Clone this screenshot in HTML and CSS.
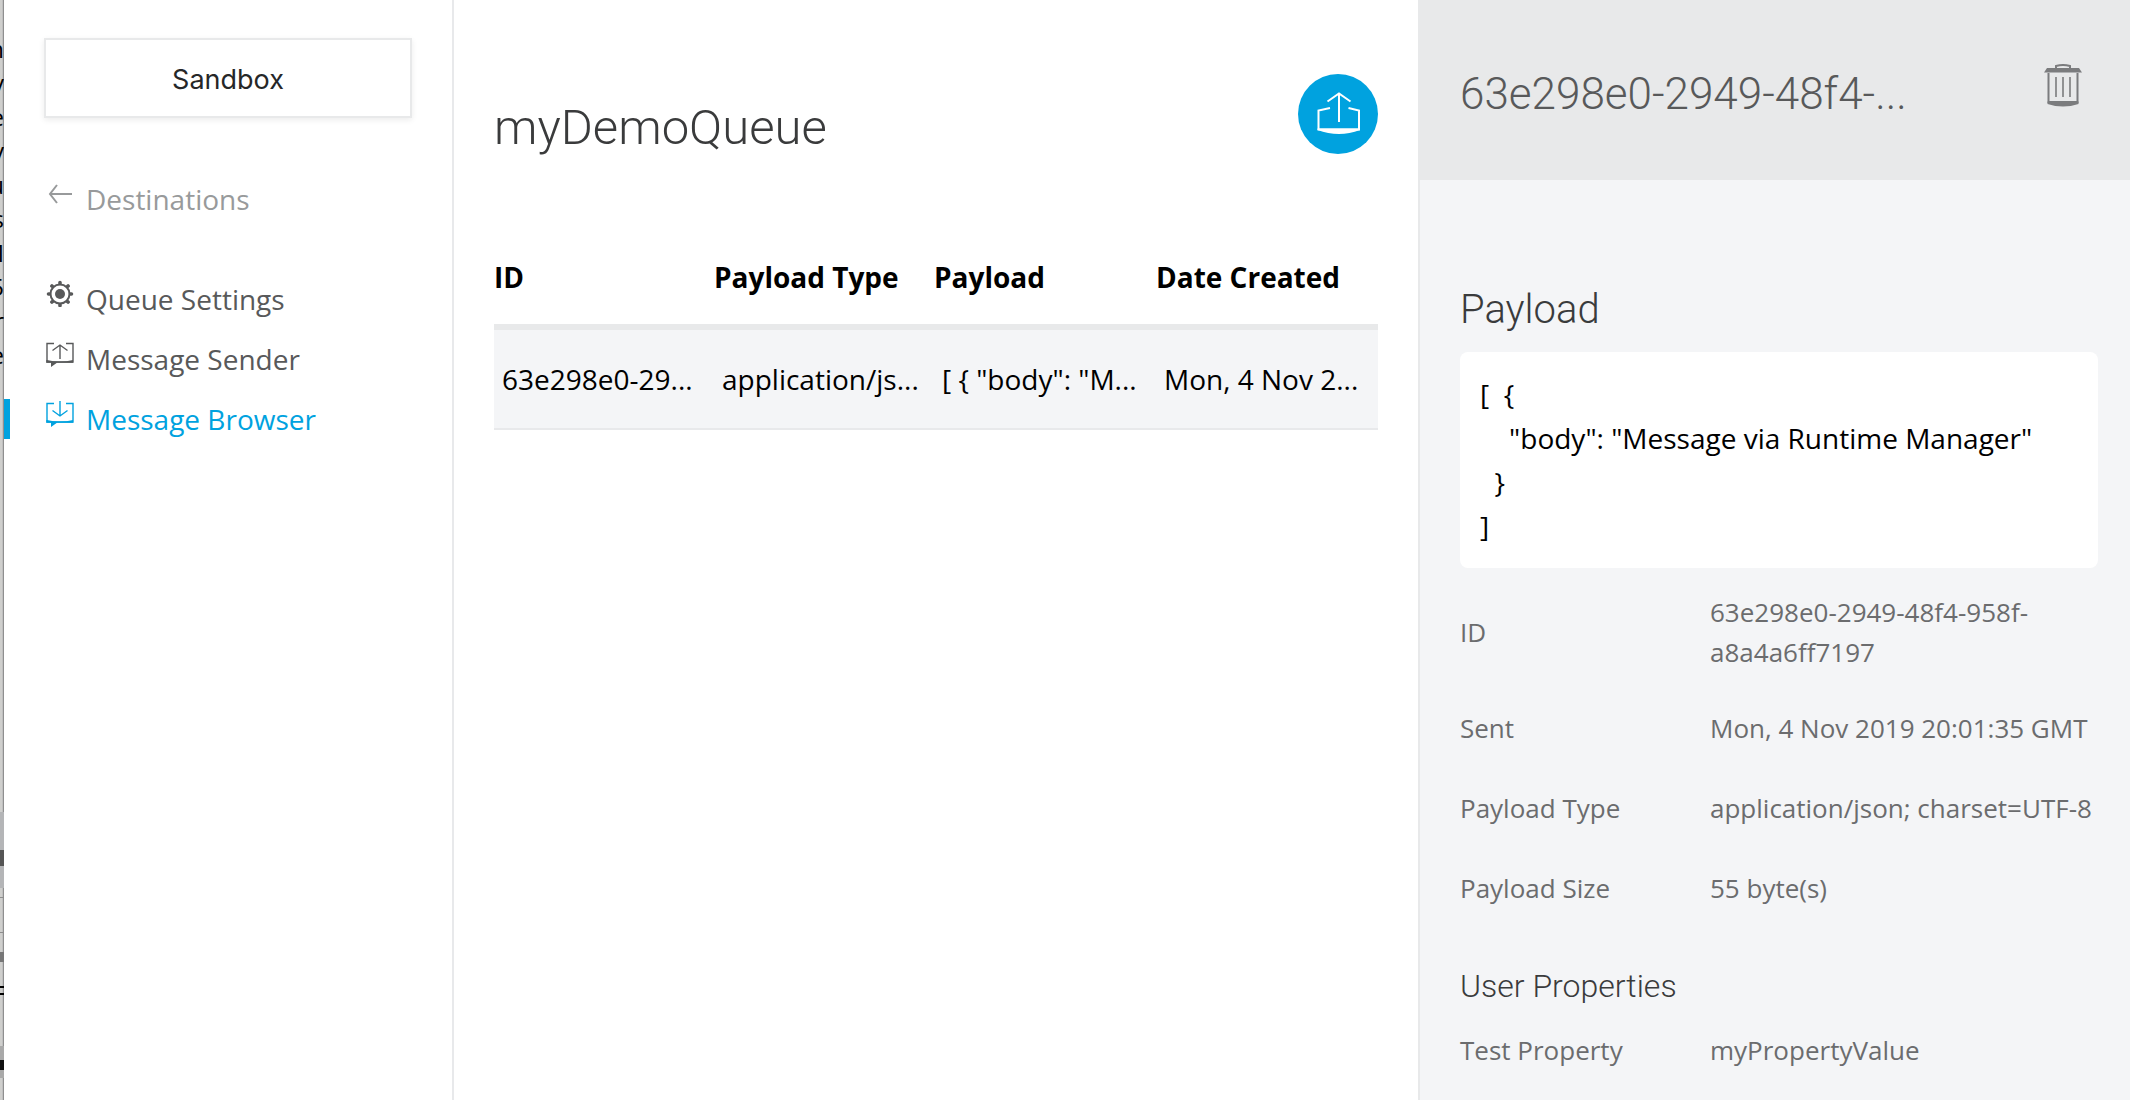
FILE: index.html
```html
<!DOCTYPE html>
<html lang="en">
<head>
<meta charset="utf-8">
<title>Message Browser - myDemoQueue</title>
<meta name="viewport" content="width=device-width, initial-scale=1">
<link rel="stylesheet" href="styles.css">
</head>
<body>
<div class="app">
  <div class="edge" aria-hidden="true">
    <div class="edge-text"><span>n</span><span>v</span><span>e</span><span>y</span><span>u</span><span>s</span><span>M</span><span>5</span><span>r</span><span>e</span><span>1</span></div>
    <div class="edge-rows"></div>
  </div>

  <aside class="sidebar">
    <button class="env" type="button">Sandbox</button>
    <nav class="nav">
      <a class="nav-link back" href="#">
        <svg class="icon" viewBox="0 0 28 28" fill="none" stroke="currentColor" stroke-width="2"><path d="M26 15H4M11 6L4 15L11 24"/></svg>
        <span>Destinations</span>
      </a>
      <a class="nav-link" href="#">
        <svg class="icon" viewBox="0 0 28 28" fill="none" stroke="currentColor"><circle cx="14" cy="15" r="9.500" stroke-width="2"/><circle cx="14" cy="15" r="5" fill="currentColor" stroke="none"/><path stroke-width="3.600" stroke-linecap="round" d="M14 3.500V4.500M14 25.500V26.500M2.500 15H3.500M24.500 15H25.500M5.900 6.900L6.300 7.300M21.700 22.700L22.100 23.100M5.900 23.100L6.300 22.700M21.700 7.300L22.100 6.900"/></svg>
        <span>Queue Settings</span>
      </a>
      <a class="nav-link" href="#">
        <svg class="icon" viewBox="0 0 28 28" fill="none" stroke="currentColor" stroke-width="1.400"><path d="M8 4.500H1V23H27V4.500H20M14 20V6M6.500 11.500L14 6L21.500 11.500"/><path fill="currentColor" stroke="none" d="M1 21Q14 24 27 21V23.700H11L5 28V23.700H.3V21Z"/></svg>
        <span>Message Sender</span>
      </a>
      <a class="nav-link active" href="#" aria-current="page">
        <svg class="icon" viewBox="0 0 28 28" fill="none" stroke="currentColor" stroke-width="1.400"><path d="M8 4.500H1V23H27V4.500H20M14 2V17M6.500 11.500L14 17L21.500 11.500"/><path fill="currentColor" stroke="none" d="M1 21Q14 24 27 21V23.700H11L5 28V23.700H.3V21Z"/></svg>
        <span>Message Browser</span>
      </a>
    </nav>
  </aside>

  <main class="main">
    <header class="main-head">
      <h1 class="title">myDemoQueue</h1>
      <button class="send" type="button" aria-label="Send message">
        <svg class="send-icon" viewBox="0 0 44 44" fill="none" stroke="currentColor" stroke-width="2"><path d="M23 30V1M11.500 9.500L23 1.500L34.500 9.500M14 16L2.500 18.500V37.500H43V18.500L32.500 16"/><path fill="currentColor" stroke="none" d="M1.500 36.500H44V38Q23 46 1.500 38Z"/></svg>
      </button>
    </header>
    <table class="messages">
      <colgroup><col class="col"><col class="col"><col class="col-wide"><col></colgroup>
      <thead>
        <tr><th scope="col">ID</th><th scope="col">Payload Type</th><th scope="col">Payload</th><th scope="col">Date Created</th></tr>
      </thead>
      <tbody>
        <tr>
          <td>63e298e0-29...</td>
          <td>application/js...</td>
          <td>[ { "body": "M...</td>
          <td>Mon, 4 Nov 2...</td>
        </tr>
      </tbody>
    </table>
  </main>

  <section class="panel">
    <header class="panel-head">
      <h2 class="panel-title">63e298e0-2949-48f4-...</h2>
      <button class="delete" type="button" aria-label="Delete message">
        <svg class="trash" viewBox="0 0 38 44" fill="none" stroke="currentColor" stroke-width="2"><path d="M12 5V2Q19 0 26 2V5M4.500 9V38H33.500V9"/><path stroke-width="1.600" d="M12 13V33M19 13V33M26 13V33"/><path fill="currentColor" stroke="none" d="M3 4H35L38 8.500H0ZM3.500 37.500H34.500V40Q19 45 3.500 40Z"/></svg>
      </button>
    </header>
    <div class="panel-body">
      <h3 class="section-title">Payload</h3>
      <pre class="payload">[  {
    "body": "Message via Runtime Manager"
  }
]</pre>
      <dl class="details">
        <div class="detail"><dt>ID</dt><dd>63e298e0-2949-48f4-958f-a8a4a6ff7197</dd></div>
        <div class="detail"><dt>Sent</dt><dd>Mon, 4 Nov 2019 20:01:35 GMT</dd></div>
        <div class="detail"><dt>Payload Type</dt><dd>application/json; charset=UTF-8</dd></div>
        <div class="detail"><dt>Payload Size</dt><dd>55 byte(s)</dd></div>
      </dl>
      <h4 class="sub-title">User Properties</h4>
      <dl class="details">
        <div class="detail"><dt>Test Property</dt><dd>myPropertyValue</dd></div>
      </dl>
    </div>
  </section>
</div>
</body>
</html>
```

FILE: styles.css
```css
* {
  box-sizing: border-box;
}

body {
  margin: 0;
  background: #fff;
  color: #000;
  font-family: "Open Sans", "Noto Sans", sans-serif;
  font-size: 28px;
  line-height: 40px;
}

h1, h2, h3, h4, dl, dd, pre {
  margin: 0;
}

button {
  padding: 0;
  border: 0;
  background: none;
  cursor: pointer;
}

svg {
  display: block;
}

.app {
  display: grid;
  grid-template-columns: 4px 450px minmax(0, 1fr) 712px;
  min-height: 100vh;
}

/* Sliver of the window behind */
.edge {
  overflow: hidden;
  background: linear-gradient(to right, #cfcfcd 0 2px, #c0c0c0 2px 3px, #8f8f8f 3px 4px);
}

.edge-text {
  display: flex;
  flex-direction: column;
  align-items: flex-end;
  height: 812px;
  padding-top: 32px;
  font-size: 24px;
  line-height: 34px;
}

.edge-rows {
  height: 288px;
  background: linear-gradient(
    to bottom,
    #b4b5b7 0 38px, #555 38px 54px, #b4b5b7 54px 76px,
    transparent 76px 85px, #8d8d8d 85px 86px,
    transparent 86px 120px, #8d8d8d 120px 121px,
    transparent 121px 140px, #777 140px 150px,
    transparent 150px 174px, #000 174px 176px,
    transparent 176px 181px, #000 181px 183px,
    transparent 183px 234px, #a9a9a9 234px 248px,
    #111 248px 258px, #a9a9a9 258px 266px,
    transparent 266px
  );
}

/* Sidebar */
.sidebar {
  padding-top: 38px;
  border-right: 2px solid #e8e9eb;
}

.env {
  display: block;
  width: 368px;
  height: 80px;
  margin: 0 40px;
  padding-top: 4px;
  border: 2px solid #e8e9ea;
  box-shadow: 0 2px 6px rgba(0, 0, 0, 0.08);
  background: #fff;
  color: #262728;
  font: 27px/40px Inter, "Liberation Sans", sans-serif;
}

.nav {
  display: flex;
  flex-direction: column;
  gap: 20px;
  padding-top: 61px;
}

.nav-link {
  display: flex;
  gap: 12px;
  padding-left: 42px;
  color: #58595a;
  text-decoration: none;
}

.back {
  margin-bottom: 40px;
  color: #989a9b;
}

.active {
  padding-left: 36px;
  border-left: 6px solid #00a2df;
  color: #00a2df;
}

.icon {
  flex: none;
  width: 28px;
  height: 28px;
}

/* Message list */
.main {
  padding: 74px 40px 0;
}

.main-head {
  display: flex;
  justify-content: space-between;
  height: 80px;
}

.title {
  padding-top: 24px;
  color: #3a3b3c;
  font: 300 49px/60px Roboto, sans-serif;
}

.send {
  display: grid;
  place-items: center;
  width: 80px;
  height: 80px;
  border-radius: 50%;
  background: #00a2df;
  color: #fff;
}

.send-icon {
  width: 44px;
  height: 44px;
}

.messages {
  width: 100%;
  margin-top: 84px;
  border-collapse: separate;
  border-spacing: 0;
  table-layout: fixed;
}

.col {
  width: 220px;
}

.col-wide {
  width: 222px;
}

.messages th {
  padding: 19px 0 27px;
  border-bottom: 6px solid #e8e9ea;
  font-weight: 700;
  text-align: left;
}

.messages td {
  padding: 29px 8px;
  border-bottom: 2px solid #e8e9eb;
  background: #f4f5f7;
  overflow: hidden;
  text-overflow: ellipsis;
  white-space: nowrap;
}

/* Message details */
.panel {
  border-left: 2px solid #e8e9ea;
  background: #f4f5f7;
}

.panel-head {
  display: flex;
  justify-content: space-between;
  height: 180px;
  padding: 64px 48px 0 40px;
  background: #e8e9ea;
}

.panel-title {
  color: #58595a;
  font: 300 44px/60px Roboto, sans-serif;
}

.delete {
  align-self: flex-start;
  color: #7b7c7e;
}

.trash {
  width: 38px;
  height: 44px;
}

.panel-body {
  padding: 106px 32px 0 40px;
}

.section-title {
  color: #3a3b3c;
  font: 300 40px/48px Roboto, sans-serif;
}

.payload {
  margin: 18px 0 8px;
  padding: 20px;
  border-radius: 8px;
  background: #fff;
  font: 28px/44px "Open Sans", "Noto Sans", sans-serif;
}

.detail {
  display: grid;
  grid-template-columns: 250px minmax(0, 1fr);
  align-items: center;
  min-height: 80px;
  padding: 16px 0;
  color: #6b6c6e;
  font-size: 26px;
}

.detail dd {
  margin-right: -8px;
}

.sub-title {
  padding: 38px 0 4px;
  color: #3a3b3c;
  font: 300 32px/40px Roboto, sans-serif;
}
```
